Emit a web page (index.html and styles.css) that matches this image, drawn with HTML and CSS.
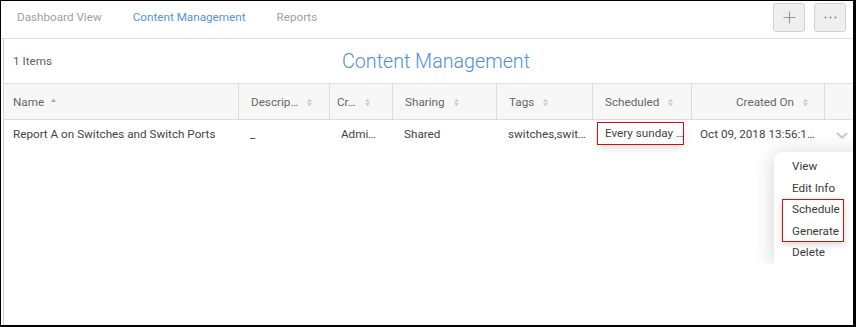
FILE: index.html
```html
<!DOCTYPE html>
<html>
<head>
    <meta charset="utf-8" />
    <title>Content Management</title>
    <link rel="stylesheet" href="styles.css">
</head>
<body>
<div class="frame">
    <div class="topbar">
        <nav class="tabs">
            <a class="tab" href="#">Dashboard View</a>
            <a class="tab active" href="#">Content Management</a>
            <a class="tab" href="#">Reports</a>
        </nav>
        <div class="actions">
            <button class="btn" title="Add">
                <svg width="13" height="13" viewBox="0 0 13 13"><path d="M6.5 0.5v12M0.5 6.5h12" stroke="#9a9a9a" stroke-width="1.2" fill="none"/></svg>
            </button>
            <button class="btn" title="More">
                <svg width="13" height="3" viewBox="0 0 13 3"><circle cx="1.5" cy="1.5" r="1" fill="#888"/><circle cx="6.5" cy="1.5" r="1" fill="#888"/><circle cx="11.5" cy="1.5" r="1" fill="#888"/></svg>
            </button>
        </div>
    </div>

    <div class="panel">
        <div class="panel_head">
            <span class="count">1 Items</span>
            <h2 class="title">Content Management</h2>
            <span></span>
        </div>
        <table class="grid">
            <colgroup>
                <col class="w_name" /><col class="w_desc" /><col class="w_cr" /><col class="w_share" />
                <col class="w_tags" /><col class="w_sched" /><col class="w_date" /><col />
            </colgroup>
            <thead>
                <tr>
                    <th class="c_name">Name<span class="sort_up"></span></th>
                    <th>Descrip…<span class="sort"></span></th>
                    <th class="c_cr">Cr…<span class="sort"></span></th>
                    <th>Sharing<span class="sort"></span></th>
                    <th>Tags<span class="sort"></span></th>
                    <th>Scheduled<span class="sort"></span></th>
                    <th class="c_date">Created On<span class="sort"></span></th>
                    <th></th>
                </tr>
            </thead>
            <tbody>
                <tr>
                    <td class="c_name">Report A on Switches and Switch Ports</td>
                    <td>_</td>
                    <td>Admi…</td>
                    <td>Shared</td>
                    <td>switches,swit…</td>
                    <td class="c_sched"><span class="mark_cell">Every sunday …</span></td>
                    <td class="c_when">Oct 09, 2018 13:56:1…</td>
                    <td class="c_more">
                        <svg class="chevron" width="12" height="7" viewBox="0 0 12 7"><path d="M1 1l5 4.5L11 1" stroke="#cccccc" stroke-width="2.2" fill="none"/></svg>
                        <ul class="menu">
                            <li>View</li>
                            <li>Edit Info</li>
                            <li class="mark_group">
                                <div>Schedule</div>
                                <div>Generate</div>
                            </li>
                            <li>Delete</li>
                        </ul>
                    </td>
                </tr>
            </tbody>
        </table>
    </div>
</div>
</body>
</html>
```

FILE: styles.css
```css
body {margin:0;font-family:Roboto, "Liberation Sans", Arial, sans-serif;}
.frame {width:856px;height:327px;box-sizing:border-box;display:flex;flex-direction:column;overflow:hidden;border:1px solid #000;border-right-width:3px;border-bottom-width:2px;background:#fff;}

/* top bar */
.topbar {display:flex;justify-content:space-between;align-items:flex-start;height:35px;padding:2px 7px 0 16px;border-bottom:1px solid #dedede;}
.tabs {display:flex;gap:31px;}
.tab {font-size:11.7px;line-height:29px;color:#a0a0a0;text-decoration:none;}
.tab.active {color:#5a92d6;}
.actions {display:flex;gap:9px;}
.btn {display:flex;align-items:center;justify-content:center;width:32px;height:29px;box-sizing:border-box;padding:0;border:1px solid #d2d2d2;border-radius:3px;background:#efefef;}

/* panel */
.panel {flex:1;margin-left:2px;border-left:1px solid #d4d4d4;}
.panel_head {display:grid;grid-template-columns:1fr auto 1fr;align-items:center;height:44px;padding-left:9px;border-bottom:1px solid #dedede;}
.count {font-size:11.7px;color:#5f5f5f;}
.title {margin:0 0 0 6px;font-size:19.7px;font-weight:300;color:#4f8fd8;}

/* table */
.grid {width:100%;table-layout:fixed;border-spacing:0;font-size:11.7px;}
.w_name {width:235px;}
.w_desc {width:91px;}
.w_cr {width:63px;}
.w_share {width:104px;}
.w_tags {width:96px;}
.w_sched {width:99px;}
.w_date {width:133px;}
.grid th {height:35px;padding:0 0 0 12px;text-align:left;font-weight:normal;color:#666;white-space:nowrap;background:#f7f7f7;border-right:1px solid #dcdcdc;border-bottom:1px solid #dcdcdc;}
.grid th:last-child {border-right:0;}
.grid td {height:27px;padding:0 0 0 11px;color:#444;white-space:nowrap;}
.grid .c_name {padding-left:9px;}
.grid .c_cr {padding-left:7px;}
.grid .c_date {padding-left:44px;}
.grid .c_sched {padding-left:5px;}
.grid .c_when {padding-left:8px;}
.grid .c_more {position:relative;padding:0;text-align:center;}

.sort,
.sort_up {display:inline-block;vertical-align:middle;width:5px;margin-left:9px;}
.sort:before,
.sort:after,
.sort_up:before {content:"";display:block;border-left:2.5px solid transparent;border-right:2.5px solid transparent;}
.sort:before {border-bottom:3px solid #d0d0d0;margin-bottom:1px;}
.sort:after {border-top:3px solid #d0d0d0;}
.sort_up {margin-left:7px;margin-top:-4px;}
.sort_up:before {border-bottom:3px solid #aaaaaa;}

.mark_cell {display:inline-block;width:85px;box-sizing:border-box;padding:3px 7px;line-height:15px;outline:1.5px solid #cc1111;box-shadow:0 4px 8px rgba(0,0,0,.14);}
.chevron {display:block;margin:3px 0 0 11px;}

/* row menu */
.menu {position:absolute;top:32px;left:-51px;width:92px;height:108px;margin:0;padding:4px 0 0;list-style:none;text-align:left;background:#fff;border-radius:9px 0 0 0;box-shadow:0 2px 22px rgba(0,0,0,.18);clip-path:inset(-30px -30px 0 -30px);}
.menu li,
.menu div {padding-left:18px;line-height:21.5px;color:#3a3a3a;}
.menu .mark_group {width:62px;box-sizing:border-box;margin-left:8px;padding-left:0;outline:1.5px solid #cc1111;outline-offset:-1px;box-shadow:0 2px 7px rgba(0,0,0,.18);}
.menu .mark_group div {padding-left:10px;}
```
